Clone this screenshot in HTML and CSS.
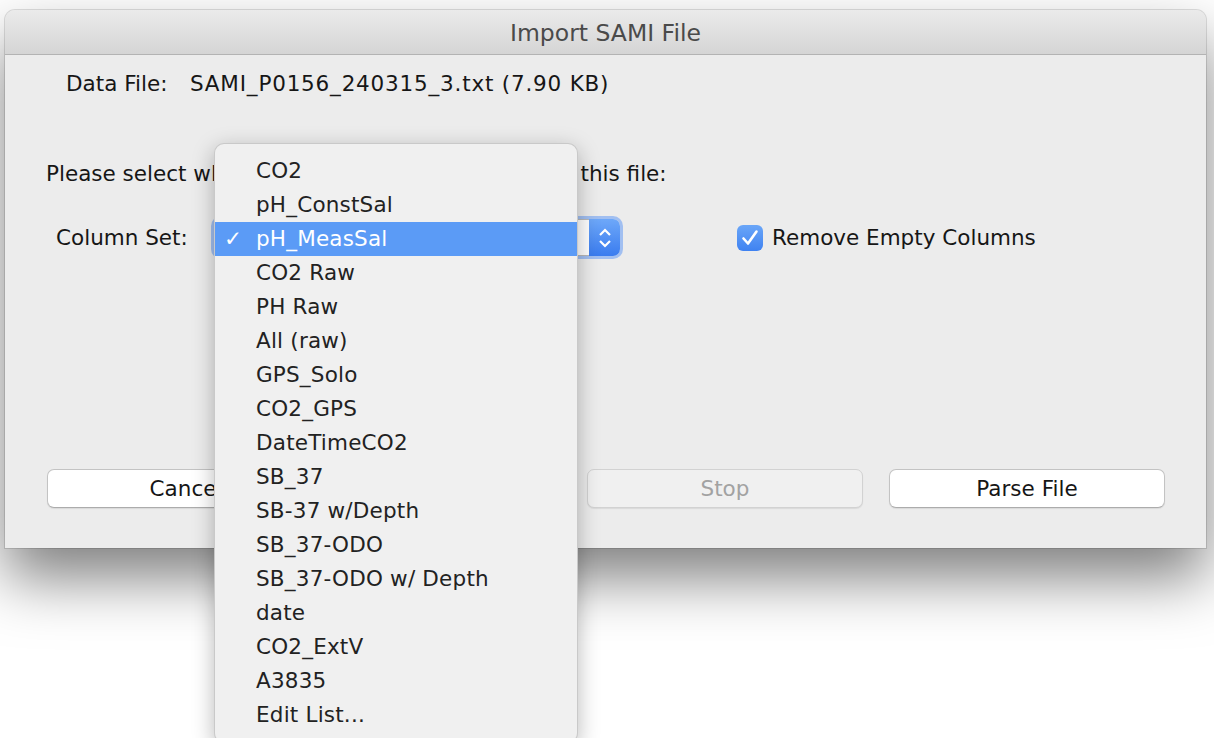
FILE: index.html
```html
<!DOCTYPE html>
<html>
<head>
<meta charset="utf-8">
<title>Import SAMI File</title>
<link rel="stylesheet" href="styles.css">
</head>
<body>
<div class="window">
  <div class="titlebar">Import SAMI File</div>
  <div class="content">
    <div class="data-row">
      <span class="data-label">Data File:</span>
      <span class="data-value">SAMI_P0156_240315_3.txt (7.90 KB)</span>
    </div>
    <div class="prompt"><span>Please select wh</span><span class="occluded">ich column set to use with</span><span>this file:</span></div>
    <div class="column-row">
      <span class="col-label">Column Set:</span>
      <div class="popup">
        <div class="popup-body"></div>
        <div class="popup-cap">
          <svg width="14" height="22" viewBox="0 0 14 22"><path d="M2 8 L7 3 L12 8" fill="none" stroke="#fff" stroke-width="2.2"/><path d="M2 14 L7 19 L12 14" fill="none" stroke="#fff" stroke-width="2.2"/></svg>
        </div>
      </div>
      <label class="check">
        <span class="checkbox"><svg width="26" height="26" viewBox="0 0 26 26"><path d="M6.5 13.5 L11 18.5 L19.5 6.5" fill="none" stroke="#fff" stroke-width="2.6" stroke-linecap="round" stroke-linejoin="round"/></svg></span>
        <span class="check-label">Remove Empty Columns</span>
      </label>
    </div>
    <div class="buttons">
      <button class="btn btn-cancel">Cancel</button>
      <button class="btn btn-stop" disabled>Stop</button>
      <button class="btn btn-parse">Parse File</button>
    </div>
  </div>
  <div class="menu">
    <div class="item">CO2</div>
    <div class="item">pH_ConstSal</div>
    <div class="item selected"><span class="tick">✓</span>pH_MeasSal</div>
    <div class="item">CO2 Raw</div>
    <div class="item">PH Raw</div>
    <div class="item">All (raw)</div>
    <div class="item">GPS_Solo</div>
    <div class="item">CO2_GPS</div>
    <div class="item">DateTimeCO2</div>
    <div class="item">SB_37</div>
    <div class="item">SB-37 w/Depth</div>
    <div class="item">SB_37-ODO</div>
    <div class="item">SB_37-ODO w/ Depth</div>
    <div class="item">date</div>
    <div class="item">CO2_ExtV</div>
    <div class="item">A3835</div>
    <div class="item">Edit List...</div>
  </div>
</div>
</body>
</html>
```

FILE: styles.css
```css
html, body {
  margin: 0;
  padding: 0;
  background: #ffffff;
  height: 738px;
  overflow: hidden;
}

body {
  font-family: "DejaVu Sans", "Noto Sans", sans-serif;
  font-size: 21.5px;
  color: #161616;
}

.window {
  position: relative;
  margin: 10px 8px 0 5px;
  width: 1201px;
  height: 538px;
  background: #ececec;
  border-radius: 10px 10px 0 0;
  box-shadow: 0 0 0 1px rgba(0,0,0,0.12), 0 30px 60px rgba(0,0,0,0.5);
}

.titlebar {
  height: 44px;
  line-height: 47px;
  text-align: center;
  font-size: 23.5px;
  color: #4a4a4a;
  background: linear-gradient(#ebebeb, #d5d5d5);
  border-bottom: 1px solid #b3b3b3;
  border-radius: 10px 10px 0 0;
}

.content {
  padding: 14px 0 0 0;
}

.data-row {
  height: 30px;
  line-height: 30px;
  display: flex;
  padding-left: 61px;
}

.data-label {
  width: 124px;
}

.data-value {
  letter-spacing: 0.8px;
}

.prompt {
  margin-top: 60px;
  height: 30px;
  line-height: 30px;
  padding-left: 41px;
  display: flex;
  white-space: nowrap;
}

.occluded {
  visibility: hidden;
  width: 356px;
  overflow: hidden;
  flex: none;
}

.column-row {
  margin-top: 30px;
  height: 37px;
  display: flex;
  align-items: center;
}

.col-label {
  margin-left: 51px;
  width: 158px;
  line-height: 30px;
}

.popup {
  display: flex;
  width: 406px;
  height: 37px;
  border-radius: 7px;
  box-shadow: 0 0 0 3px rgba(100, 155, 245, 0.55);
}

.popup-body {
  flex: 1;
  background: #ffffff;
  border: 1px solid #b9b9b9;
  border-right: none;
  border-radius: 7px 0 0 7px;
}

.popup-cap {
  width: 31px;
  display: flex;
  align-items: center;
  justify-content: center;
  background: linear-gradient(#6ea8f9, #3a7cef);
  border-radius: 0 7px 7px 0;
}

.check {
  display: flex;
  align-items: center;
  margin-left: 117px;
}

.checkbox {
  width: 26px;
  height: 26px;
  border-radius: 6px;
  background: linear-gradient(#6aa6f8, #3f82f1);
  display: flex;
}

.check-label {
  margin-left: 9px;
}

.buttons {
  margin-top: 213px;
  display: flex;
  padding-left: 42px;
}

.btn {
  height: 39px;
  width: 276px;
  font: inherit;
  color: #161616;
  background: #ffffff;
  border: 1px solid #c3c3c3;
  border-bottom-color: #acacac;
  border-radius: 7px;
  box-shadow: 0 1px 1px rgba(0,0,0,0.08);
  padding: 0;
}

.btn-cancel {
  padding-left: 2px;
}

.btn-stop {
  margin-left: 264px;
  color: #a2a2a2;
  background: #f0f0f0;
  border-color: #d2d2d2;
}

.btn-parse {
  margin-left: 26px;
}

.menu {
  position: absolute;
  left: 209px;
  top: 133px;
  width: 364px;
  height: 600px;
  padding-top: 10px;
  box-sizing: border-box;
  background: #f0f0f0;
  border: 1px solid rgba(0,0,0,0.16);
  border-radius: 10px;
  box-shadow: 0 6px 22px rgba(0,0,0,0.28);
  z-index: 5;
}

.item {
  position: relative;
  height: 34px;
  line-height: 34px;
  padding-left: 41px;
  color: #222222;
  letter-spacing: 0.2px;
}

.item.selected {
  background: #5b9bf6;
  color: #ffffff;
}

.tick {
  position: absolute;
  left: 9px;
  top: 0;
  font-weight: bold;
}
```
